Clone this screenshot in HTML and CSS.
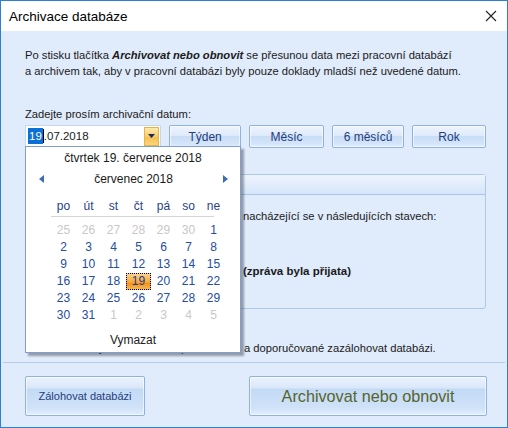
FILE: index.html
```html
<!DOCTYPE html>
<html lang="cs">
<head>
<meta charset="utf-8">
<title>Archivace databáze</title>
<link rel="stylesheet" href="styles.css">
</head>
<body>
<div class="window">
  <div class="titlebar">
    <span class="title">Archivace databáze</span>
    <svg class="close" width="12" height="12" viewBox="0 0 12 12"><path d="M1 1L11 11M11 1L1 11" stroke="#222" stroke-width="1.1" fill="none"/></svg>
  </div>
  <div class="content">
    <p class="intro">Po stisku tlačítka <b><i>Archivovat nebo obnovit</i></b> se přesunou data mezi pracovní databází<br>a archivem tak, aby v pracovní databázi byly pouze doklady mladší než uvedené datum.</p>
    <div class="label">Zadejte prosím archivační datum:</div>
    <div class="daterow">
      <div class="combo">
        <span class="value"><span class="sel">19</span><span class="caret"></span>.07.2018</span>
        <span class="dropbtn"><svg width="7" height="4" viewBox="0 0 7 4"><path d="M0 0H7L3.5 4Z" fill="#1d2b5c"/></svg></span>
      </div>
      <div class="btn small w72">Týden</div>
      <div class="btn small w76">Měsíc</div>
      <div class="btn small w72">6 měsíců</div>
      <div class="btn small w74">Rok</div>
    </div>
    <div class="group">
      <div class="group-head"></div>
      <div class="group-body">
        <div class="gline"><span class="pre">Archivovat se budou pouze doklady</span>nacházející se v následujících stavech:</div>
        <div class="gline bold"><span class="pre">Přijaté doklady</span>(zpráva byla přijata)</div>
      </div>
    </div>
    <div class="note"><span class="pre note-pre">Před archivací je nutné ukončit práci</span>a doporučované zazálohovat databázi.</div>
  </div>
  <div class="footer">
    <div class="btn big w119">Zálohovat databázi</div>
    <div class="btn big w237 primary">Archivovat nebo obnovit</div>
  </div>

  <div class="calendar">
    <div class="cal-today">čtvrtek 19. července 2018</div>
    <div class="cal-nav">
      <svg class="arr" width="5" height="8" viewBox="0 0 5 8"><path d="M5 0V8L0 4Z" fill="#3d6cb5"/></svg>
      <span>červenec 2018</span>
      <svg class="arr" width="5" height="8" viewBox="0 0 5 8"><path d="M0 0V8L5 4Z" fill="#3d6cb5"/></svg>
    </div>
    <div class="cal-grid head">
      <span>po</span><span>út</span><span>st</span><span>čt</span><span>pá</span><span>so</span><span>ne</span>
    </div>
    <div class="cal-rule"></div>
    <div class="cal-grid days">
      <span class="o">25</span><span class="o">26</span><span class="o">27</span><span class="o">28</span><span class="o">29</span><span class="o">30</span><span>1</span>
      <span>2</span><span>3</span><span>4</span><span>5</span><span>6</span><span>7</span><span>8</span>
      <span>9</span><span>10</span><span>11</span><span>12</span><span>13</span><span>14</span><span>15</span>
      <span>16</span><span>17</span><span>18</span><span class="cur">19</span><span>20</span><span>21</span><span>22</span>
      <span>23</span><span>24</span><span>25</span><span>26</span><span>27</span><span>28</span><span>29</span>
      <span>30</span><span>31</span><span class="o">1</span><span class="o">2</span><span class="o">3</span><span class="o">4</span><span class="o">5</span>
    </div>
    <div class="cal-clear">Vymazat</div>
  </div>
</div>
</body>
</html>
```
FILE: styles.css
```css
* { box-sizing: border-box; }
html, body { margin: 0; padding: 0; }
body {
  font-family: "Liberation Sans", Arial, sans-serif;
  font-size: 11px;
  color: #1a1a1a;
}
.window {
  position: relative;
  width: 508px;
  height: 428px;
  overflow: hidden;
  border: 1px solid #2c7fd4;
  background: #e0ebfb;
  display: flex;
  flex-direction: column;
}
.titlebar {
  flex: none;
  height: 30px;
  background: #fff;
  display: flex;
  align-items: center;
  justify-content: space-between;
  padding: 0 10px 0 8px;
}
.title { color: #000; font-size: 13.5px; }
.content { padding: 16px 21px 0 24px; white-space: nowrap; }
.intro { margin: 0; line-height: 16px; font-size: 11.2px; }
.label { margin-top: 27px; line-height: 16px; font-size: 11.2px; }
.daterow { display: flex; margin-top: 3px; height: 23px; }
.combo {
  width: 138px; height: 22px;
  background: #fff;
  border: 1px solid #c9d7ec;
  display: flex; align-items: center; justify-content: space-between;
  padding: 0 1px 0 2px;
}
.value { font-size: 11.5px; line-height: 16px; display: flex; align-items: center; }
.sel { background: #0a6fd6; color: #fff; padding: 0 1px; }
.caret { width: 1px; height: 14px; background: #000; }
.dropbtn {
  width: 15px; height: 19px;
  background: linear-gradient(#fdeaae, #f8cd6c 50%, #f6bd4c 51%, #fad57f);
  border: 1px solid #e5b24c;
  display: flex; align-items: center; justify-content: center;
}
.btn {
  display: flex; align-items: center; justify-content: center;
  border: 1px solid #8fb2de;
  border-radius: 2px;
  color: #1f3d7e;
  background: linear-gradient(#eef4fd 0%, #dfeafb 45%, #c8ddf6 50%, #d4e5f9 85%, #e3eefc 100%);
  box-shadow: inset 0 0 0 1px rgba(255,255,255,0.6);
  white-space: nowrap;
}
.small { height: 23px; font-size: 12px; margin-left: 8px; }
.w72 { width: 73px; } .w76 { width: 76px; } .w74 { width: 75px; }
.group {
  margin-top: 26px;
  height: 135px;
  border: 1px solid #adc8ee;
  border-radius: 3px;
}
.group-head {
  height: 20px;
  background: linear-gradient(#eef4fd, #d6e5fa);
  border-bottom: 1px solid #a8c4ec;
}
.group-body { padding: 13px 0 0 10px; font-size: 11.2px; }
.pre { display: inline-block; width: 207px; vertical-align: top; }
.gline { line-height: 16px; }
.gline.bold { font-weight: bold; margin-top: 39px; font-size: 11.5px; }
.note { margin-top: 31px; line-height: 16px; font-size: 11.2px; }
.note-pre { width: 219px; }
.footer {
  flex: none;
  margin-top: 6px;
  border-top: 1px solid #b4cdef;
  margin-left: 2px; margin-right: 2px;
  padding: 13px 18px 0 22px;
  display: flex; justify-content: space-between;
}
.big { height: 40px; font-size: 11px; }
.w119 { width: 120px; } .w237 { width: 238px; }
.big { background: linear-gradient(#eaf2fd 0%, #dbe8fa 28%, #c3daf6 32%, #cfe2f8 80%, #e2eefc 100%); }
.primary { font-size: 16.2px; color: #56642c; }

.calendar {
  position: absolute;
  left: 24px; top: 145px;
  width: 216px; height: 207px;
  background: #fff;
  border: 1px solid #7e9fd5;
  box-shadow: 3px 3px 2px rgba(60,60,60,0.45);
  padding: 3px 0 0 0;
  font-size: 12px;
}
.cal-today { text-align: center; line-height: 16px; }
.cal-nav {
  display: flex; align-items: center; justify-content: space-between;
  padding: 0 12px 0 13px; margin-top: 5px; line-height: 16px;
}
.cal-grid { display: grid; grid-template-columns: repeat(7, 25px); margin-left: 25px; }
.cal-grid span { text-align: center; line-height: 17px; }
.cal-grid.head { margin-top: 11px; color: #2a3f85; }
.cal-rule { height: 1px; background: #d5d5d5; margin: 1px 26px 5px 25px; }
.cal-grid.days span { color: #244c9f; }
.cal-grid.days span.o { color: #c8c8c8; }
.cal-grid.days span.cur {
  background: linear-gradient(#fcd896, #f7a63a 55%, #f2901a 60%, #f9be5c);
  outline: 1px dotted #000; outline-offset: -1px;
  color: #1e3f86;
}
.cal-clear { text-align: center; margin-top: 8px; line-height: 16px; color: #222; }
```
